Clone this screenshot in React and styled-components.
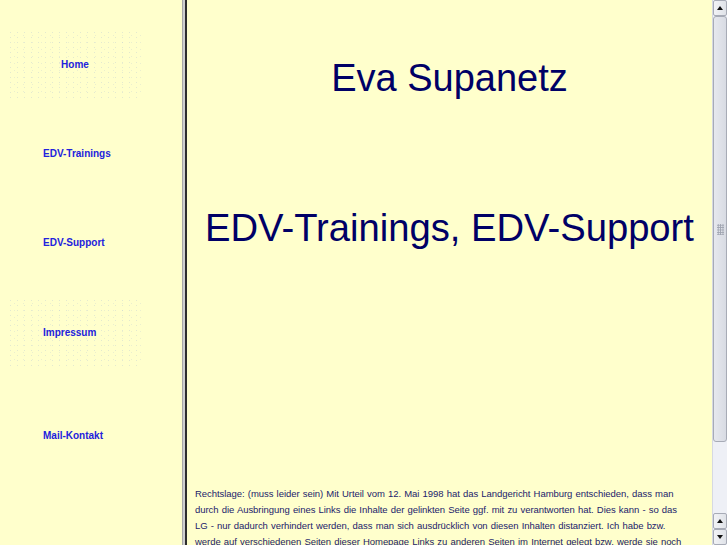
import React from 'react';
import styled, { createGlobalStyle, css } from 'styled-components';

const GlobalStyle = createGlobalStyle`
    html, body {
        margin: 0;
        padding: 0;
        height: 100%;
        overflow: hidden;
        background-color: #ffffcc;
    }
    #root {
        height: 100%;
    }
`;

const Frameset = styled.div`
    width: 727px;
    height: 545px;
    display: flex;
    flex-direction: row;
    background-color: #ffffcc;
    font-family: "Liberation Sans", Arial, Helvetica, sans-serif;
    overflow: hidden;
`;

const NavFrame = styled.nav`
    width: 182px;
    flex-shrink: 0;
    display: flex;
    flex-direction: column;
    padding-left: 7px;
    box-sizing: border-box;
`;

const dots = css`
    background-image:
        radial-gradient(circle, rgba(175, 190, 212, 0.35) 0.6px, transparent 1px),
        radial-gradient(circle, rgba(175, 190, 212, 0.25) 0.6px, transparent 1px);
    background-size: 7px 5px, 9px 7px;
    background-position: 0 0, 3px 2px;
`;

const NavItem = styled.a`
    width: 136px;
    height: 68px;
    margin-top: ${({ $top }) => $top}px;
    display: flex;
    align-items: center;
    justify-content: ${({ $center }) => ($center ? 'center' : 'flex-start')};
    padding-left: ${({ $center }) => ($center ? '0' : '36px')};
    box-sizing: border-box;
    font-size: 10px;
    font-weight: bold;
    color: #2222dd;
    text-decoration: none;
    ${({ $textured }) => $textured && dots};
`;

const Divider = styled.div`
    width: 5px;
    flex-shrink: 0;
    background-color: #cfcfcf;
    border-left: 1px solid #a8a8a8;
    border-right: 2px solid #2e2e2e;
    box-sizing: border-box;
`;

const MainFrame = styled.main`
    flex: 1;
    display: flex;
    flex-direction: row;
    overflow: hidden;
`;

const Content = styled.div`
    flex: 1;
    padding: 0 8px;
    display: flex;
    flex-direction: column;
    color: #000066;
`;

const Heading = styled.div`
    font-size: ${({ $size }) => $size}px;
    text-align: center;
    margin-top: ${({ $top }) => $top}px;
    line-height: 44px;
    white-space: nowrap;
`;

const Legal = styled.p`
    margin: 0;
    margin-top: 236px;
    font-size: 9.5px;
    letter-spacing: -0.05px;
    word-spacing: 0.6px;
    line-height: 16px;
    color: #22226b;
`;

const Scrollbar = styled.div`
    width: 15px;
    flex-shrink: 0;
    display: flex;
    flex-direction: column;
    background-color: #eef0f6;
    border-left: 1px solid #d6d9e2;
    box-sizing: border-box;
`;

const ArrowButton = styled.div`
    height: 16px;
    flex-shrink: 0;
    display: flex;
    align-items: center;
    justify-content: center;
    background: linear-gradient(to right, #f2f3f6, #dfe2e8);
    border: 1px solid #a7abb6;
    border-radius: 2px;
    box-sizing: border-box;
    &::after {
        content: '';
        width: 0;
        height: 0;
        border-left: 3px solid transparent;
        border-right: 3px solid transparent;
        ${({ $down }) => ($down
            ? 'border-top: 4px solid #111;'
            : 'border-bottom: 4px solid #111;')}
    }
`;

const Thumb = styled.div`
    height: 426px;
    flex-shrink: 0;
    display: flex;
    align-items: center;
    justify-content: center;
    background: linear-gradient(to right, #e6e8ee, #d8dbe3);
    border: 1px solid #a7abb6;
    border-radius: 3px;
    box-sizing: border-box;
`;

const Grip = styled.div`
    width: 7px;
    height: 11px;
    background-image: radial-gradient(circle, #9ea3af 0.8px, transparent 1px);
    background-size: 2.4px 2.4px;
`;

const Track = styled.div`
    flex: 1;
`;

const links = [
    { label: 'Home', top: 30, center: true, textured: true },
    { label: 'EDV-Trainings', top: 21 },
    { label: 'EDV-Support', top: 21 },
    { label: 'Impressum', top: 22, textured: true },
    { label: 'Mail-Kontakt', top: 35 },
];

function App() {
    return (
        <>
            <GlobalStyle />
            <Frameset>
                <NavFrame>
                    {links.map((l) => (
                        <NavItem key={l.label} href="#" $top={l.top} $center={l.center} $textured={l.textured}>
                            {l.label}
                        </NavItem>
                    ))}
                </NavFrame>
                <Divider />
                <MainFrame>
                    <Content>
                        <Heading $size={38} $top={56}>Eva Supanetz</Heading>
                        <Heading $size={38.2} $top={106}>EDV-Trainings, EDV-Support</Heading>
                        <Legal>
                            Rechtslage: (muss leider sein) Mit Urteil vom 12. Mai 1998 hat das Landgericht Hamburg
                            entschieden, dass man<br />
                            durch die Ausbringung eines Links die Inhalte der gelinkten Seite
                            ggf. mit zu verantworten hat. Dies kann - so das<br />
                            LG - nur dadurch verhindert werden, dass
                            man sich ausdrücklich von diesen Inhalten distanziert. Ich habe bzw.<br />
                            werde auf verschiedenen
                            Seiten dieser Homepage Links zu anderen Seiten im Internet gelegt bzw. werde sie noch<br />
                            legen. Für alle diese Links gilt: Ich möchte ausdrücklich betonen, dass ich keinerlei
                            Einfluss auf die Gestaltung und die Inhalte der gelinkten Seiten habe.
                        </Legal>
                    </Content>
                    <Scrollbar>
                        <ArrowButton />
                        <Thumb><Grip /></Thumb>
                        <Track />
                        <ArrowButton />
                        <ArrowButton $down />
                    </Scrollbar>
                </MainFrame>
            </Frameset>
        </>
    );
}

export default App;
